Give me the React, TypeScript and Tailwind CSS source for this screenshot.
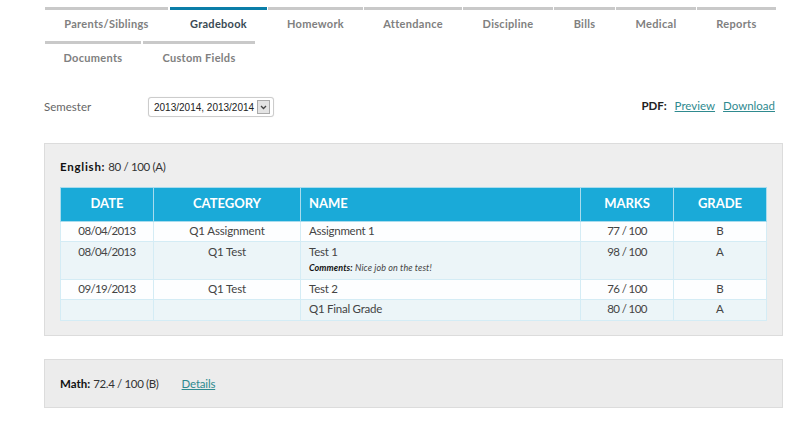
const font = { fontFamily: '"Lato", "Liberation Sans", sans-serif' };

const row1 = [
  { label: "Parents/Siblings", w: "w-[123px]", mr: "mr-[2px]" },
  { label: "Gradebook", w: "w-[97px]", mr: "mr-[1px]", active: true },
  { label: "Homework", w: "w-[95px]", mr: "mr-[1px]" },
  { label: "Attendance", w: "w-[98px]", mr: "mr-[1px]" },
  { label: "Discipline", w: "w-[90px]", mr: "mr-[1px]" },
  { label: "Bills", w: "w-[61px]", mr: "mr-[1px]" },
  { label: "Medical", w: "w-[80px]", mr: "mr-[1px]" },
  { label: "Reports", w: "w-[79px]", mr: "" },
];
const row2 = [
  { label: "Documents", w: "w-[96px]", mr: "mr-[2px]" },
  { label: "Custom Fields", w: "w-[112px]", mr: "" },
];

function Tab({ t }: { t: { label: string; w: string; mr: string; active?: boolean } }) {
  return (
    <div
      className={`${t.w} ${t.mr} h-[34px] border-t-[3px] text-center text-[11px] leading-[28px] font-bold tracking-[0.3px] ${
        t.active ? "border-[#0a7ea8] text-[#3a4a55]" : "border-[#c9c9c9] text-[#808080]"
      }`}
    >
      {t.label}
    </div>
  );
}

const rows = [
  { date: "08/04/2013", cat: "Q1 Assignment", name: "Assignment 1", marks: "77 / 100", grade: "B", alt: false, h: "h-[20px]", pt: "pt-[2px]" },
  { date: "08/04/2013", cat: "Q1 Test", name: "Test 1", marks: "98 / 100", grade: "A", alt: true, comment: "Nice job on the test!", h: "h-[38px]", pt: "pt-[3px]" },
  { date: "09/19/2013", cat: "Q1 Test", name: "Test 2", marks: "76 / 100", grade: "B", alt: false, h: "h-[20px]", pt: "pt-[2px]" },
  { date: "", cat: "", name: "Q1 Final Grade", marks: "80 / 100", grade: "A", alt: true, h: "h-[21px]", pt: "pt-[2px]" },
];

export default function App() {
  return (
    <div className="w-[809px] h-[427px] bg-white overflow-hidden text-[#444]" style={font}>
      <div className="ml-[45px] pt-[7px] flex w-[740px] flex-wrap">
        {row1.map((t) => (
          <Tab key={t.label} t={t} />
        ))}
        {row2.map((t) => (
          <Tab key={t.label} t={t} />
        ))}
      </div>

      <div className="ml-[44px] mt-[22px] w-[731px] h-[20px] flex items-center text-[11.5px]">
        <span className="w-[104px] text-[#666]">Semester</span>
        <div className="h-[20px] w-[126px] rounded-[3px] border border-[#ccc] bg-white flex items-center pl-[5px] text-[10px] text-[#222] shadow-[0_0_1px_#ddd]">
          <span className="whitespace-nowrap" style={{ fontFamily: '"Liberation Sans", sans-serif' }}>
            2013/2014, 2013/2014
          </span>
          <span className="ml-auto mr-[3px] w-[13px] h-[14px] border border-[#aaa] bg-[#e4e4e4] flex items-center justify-center">
            <svg width="7" height="5" viewBox="0 0 7 5">
              <path d="M1 1l2.5 2.5L6 1" fill="none" stroke="#444" strokeWidth="1.3" />
            </svg>
          </span>
        </div>
        <div className="ml-auto flex items-center mb-[2px]">
          <span className="font-bold text-[#222] mr-[8px]">PDF:</span>
          <span className="underline text-[#2f8a8f] mr-[8px]">Preview</span>
          <span className="underline text-[#2f8a8f]">Download</span>
        </div>
      </div>

      <div className="ml-[44px] mt-[26px] w-[739px] h-[193px] border border-[#dcdcdc] bg-[#eeeeee] px-[15px] pt-[16px]">
        <div className="text-[11.5px] leading-[14px] text-[#333] h-[27px]">
          <span className="font-bold text-[#111] tracking-[0.75px]">English:</span>{" "}
          <span className="tracking-[-0.35px]">80 / 100 (A)</span>
        </div>
        <table className="table-fixed border-collapse w-[706px] text-[11.5px] text-[#444]">
          <colgroup>
            <col className="w-[93px]" />
            <col className="w-[147px]" />
            <col className="w-[280px]" />
            <col className="w-[93px]" />
            <col className="w-[93px]" />
          </colgroup>
          <thead>
            <tr className="h-[34px] bg-[#1aaad8] text-white text-[13px] font-bold">
              <th className="border border-[#a8dcee] font-bold pb-[2px]">DATE</th>
              <th className="border border-[#a8dcee] font-bold pb-[2px]">CATEGORY</th>
              <th className="border border-[#a8dcee] font-bold text-left pl-[8px] pb-[2px]">NAME</th>
              <th className="border border-[#a8dcee] font-bold pb-[2px]">MARKS</th>
              <th className="border border-[#a8dcee] font-bold pb-[2px]">GRADE</th>
            </tr>
          </thead>
          <tbody>
            {rows.map((r, i) => (
              <tr key={i} className={`${r.alt ? "bg-[#ecf5f8]" : "bg-[#fdfeff]"} ${r.h}`}>
                <td className={`border border-[#d4ecf5] text-center align-top ${r.pt} leading-[14px] tracking-[-0.65px]`}>{r.date}</td>
                <td className={`border border-[#d4ecf5] text-center align-top ${r.pt} leading-[14px] tracking-[-0.15px]`}>{r.cat}</td>
                <td className={`border border-[#d4ecf5] pl-[8px] align-top ${r.pt} leading-[14px] tracking-[-0.25px]`}>
                  {r.name}
                  {r.comment && (
                    <div className="text-[9px] italic leading-[10px] mt-[4px] tracking-[0.1px]">
                      <span className="font-bold text-[#111]">Comments:</span> {r.comment}
                    </div>
                  )}
                </td>
                <td className={`border border-[#d4ecf5] text-center align-top ${r.pt} leading-[14px] tracking-[-0.6px]`}>{r.marks}</td>
                <td className={`border border-[#d4ecf5] text-center align-top ${r.pt} leading-[14px]`}>{r.grade}</td>
              </tr>
            ))}
          </tbody>
        </table>
      </div>

      <div className="ml-[44px] mt-[23px] w-[739px] h-[49px] border border-[#dcdcdc] bg-[#ececec] px-[15px] flex items-center text-[11.5px] text-[#333]">
        <span>
          <span className="font-bold text-[#111]">Math:</span>{" "}
          <span className="tracking-[-0.35px]">72.4 / 100 (B)</span>
        </span>
        <span className="ml-[23px] underline text-[#2f8a8f] tracking-[-0.2px]">Details</span>
      </div>
    </div>
  );
}
